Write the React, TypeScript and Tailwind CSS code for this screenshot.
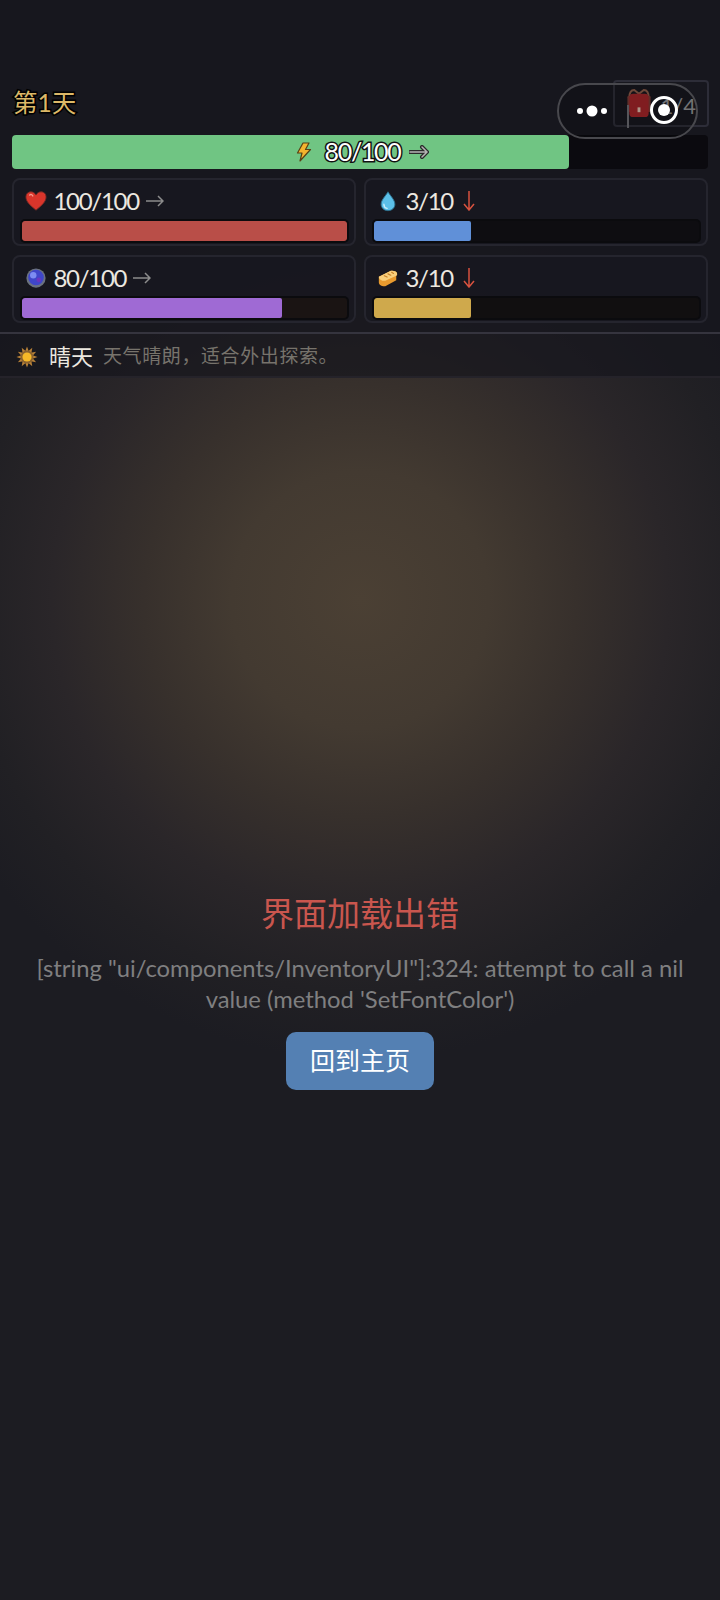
import React from 'react';

const FONT = "font-['Lato','Noto_Sans_CJK_SC',sans-serif]";

function Heart() {
    return (
        <svg viewBox="0 0 24 24" className="w-[22px] h-[22px]">
            <path d="M12 22C6 17 1 13 1 7.500 1 3.800 3.800 2 6.500 2 9 2 11 3.500 12 5.500 13 3.500 15 2 17.500 2 20.200 2 23 3.800 23 7.500 23 13 18 17 12 22Z" fill="#d9352b" stroke="#6e2a26" strokeWidth="1" />
            <path d="M5 5.500C6.500 4.500 8 5 8.500 6.500" stroke="#f59a8e" strokeWidth="1.500" fill="none" strokeLinecap="round" />
        </svg>
    );
}

function Orb() {
    return (
        <svg viewBox="0 0 24 24" className="w-[22px] h-[22px]">
            <circle cx="12" cy="12" r="10.500" fill="#6b7280" />
            <circle cx="12" cy="11.500" r="8.500" fill="#3f46c9" />
            <circle cx="9" cy="9" r="3.500" fill="#7d8cf2" />
            <circle cx="15" cy="14" r="2.500" fill="#6a35c0" />
        </svg>
    );
}

function Drop() {
    return (
        <svg viewBox="0 0 24 24" className="w-[22px] h-[22px]">
            <path d="M12 2C9 7 4.500 11 4.500 15.500 4.500 19.600 7.800 22.500 12 22.500 16.200 22.500 19.500 19.600 19.500 15.500 19.500 11 15 7 12 2Z" fill="#5cc0e8" stroke="#2b6f8c" strokeWidth="1" />
            <path d="M7.500 15.500C7.500 18 9 19.500 11 20" stroke="#c9eefb" strokeWidth="1.500" fill="none" strokeLinecap="round" />
        </svg>
    );
}

function Bread() {
    return (
        <svg viewBox="0 0 24 24" className="w-[22px] h-[22px]">
            <path d="M2 10.500 14 4.500C17 3.500 22 4.500 22 7.500 22 8.500 21.500 9 21 9.500V14.500L9 21C6 21.500 2 20 2 17Z" fill="#e89a2e" />
            <path d="M2 10.500 14 4.500C17 3.500 22 4.500 22 7.500 22 8.500 21.500 9 21 9.500L9 15C6 15.500 2 13.500 2 10.500Z" fill="#f8cf7c" />
            <path d="M8 9.500 11 11M12 7.500 15 9M16 5.800 18 7" stroke="#c9822a" strokeWidth="1.300" strokeLinecap="round" />
        </svg>
    );
}

function Sun() {
    const rays = [0, 30, 60, 90, 120, 150, 180, 210, 240, 270, 300, 330];
    return (
        <svg viewBox="0 0 24 24" className="w-[22px] h-[22px]">
            {rays.map((r) => (
                <path key={r} d="M12 0.500 14 6H10Z" fill="#b98238" transform={`rotate(${r} 12 12)`} />
            ))}
            <circle cx="12" cy="12" r="7" fill="#8a6330" />
            <circle cx="12" cy="12" r="5" fill="#f7b928" />
        </svg>
    );
}

function Bolt() {
    return (
        <svg viewBox="0 0 16 20" className="w-[16px] h-[20px]">
            <path d="M7 1 1.500 11H6L4 19 14.500 7.500H9.500L13 1Z" fill="#f5b42e" stroke="#5a4015" strokeWidth="1.200" strokeLinejoin="round" />
        </svg>
    );
}

function Bag() {
    return (
        <svg viewBox="0 0 26 30" className="w-[26px] h-[29px]">
            <path d="M3 9C3 3 5 1 8 1L13 5 18 1C21 1 23 3 23 9" stroke="#8a5a48" strokeWidth="2" fill="none" />
            <rect x="1" y="7" width="3" height="17" rx="1.500" fill="#7a3a34" />
            <rect x="22" y="7" width="3" height="17" rx="1.500" fill="#7a3a34" />
            <rect x="3" y="5" width="20" height="24" rx="4" fill="#a02529" />
            <rect x="11.500" y="19" width="3" height="5" fill="#d9b8a8" />
        </svg>
    );
}

function RightArrow() {
    return (
        <svg viewBox="0 0 18 12" className="ml-[7px] w-[18px] h-[12px]" fill="none" stroke="#8c8c8c" strokeWidth="1.500">
            <path d="M0 6H17M12 1 17 6 12 11" />
        </svg>
    );
}

function DownArrow() {
    return (
        <svg viewBox="0 0 12 20" className="ml-[10px] w-[12px] h-[20px]" fill="none" stroke="#d8523f" strokeWidth="1.500">
            <path d="M6 0V19M1 13 6 19 11 13" />
        </svg>
    );
}

function StatCard({ icon, value, down, fill, width, track }: {
    icon: React.ReactNode;
    value: string;
    down?: boolean;
    fill: string;
    width: string;
    track: string;
}) {
    return (
        <div className="h-[68px] rounded-lg border-2 border-[#25252e] bg-[#17171f]/60 px-[7.5px] pt-[4px]">
            <div className="flex items-center h-[33px]">
                <span className="w-[22px] ml-[3px] flex justify-center">{icon}</span>
                <span className="ml-[7px] text-[24px] leading-[33px] tracking-[-1.3px] text-[#ece8e0]">{value}</span>
                {down ? <DownArrow /> : <RightArrow />}
            </div>
            <div className={`mt-[4px] h-[20px] rounded-[3px] ring-2 ring-[#0b0b0e] overflow-hidden ${track}`}>
                <div className={`h-full rounded-[2px] ${fill}`} style={{ width }} />
            </div>
        </div>
    );
}

export default function App() {
    return (
        <div className={`relative min-h-[1600px] w-[720px] overflow-hidden bg-[#1c1c22] bg-[radial-gradient(circle_460px_at_360px_600px,#4b4034_0%,#433a31_28%,#37302c_47%,#2a2629_67%,#212024_85%,#1c1c22_100%)] ${FONT}`}>
            <div className="bg-[#16161d]/85 pt-[80px] pb-[9px]">
                <div className="flex justify-between items-start pl-[13px] pr-[11px] h-[55px]">
                    <span className="text-[24.5px] leading-[46px] text-[#dcb868] [-webkit-text-stroke:3px_#000] [paint-order:stroke_fill]">第1天</span>
                    <div className="relative w-[96px] h-[47px] rounded-[4px] border-2 border-[#2d2d38] text-[22px] leading-[48px] text-[#8f8f92]">
                        <span className="absolute left-[11px] top-[7px]"><Bag /></span>
                        <span className="absolute right-[11px] top-0">1/4</span>
                    </div>
                </div>

                <div className="relative mx-[12px] h-[34px] rounded-[4px] bg-[#0b0a0f]">
                    <div className="h-full rounded-[4px] bg-[#70c583]" style={{ width: '80%' }} />
                    <div className="absolute inset-0 flex items-center justify-center pl-[5px]">
                        <Bolt />
                        <span className="ml-[12px] text-[25px] tracking-[-1.3px] text-white [-webkit-text-stroke:3px_#111] [paint-order:stroke_fill]">80/100</span>
                        <svg viewBox="0 0 20 14" className="ml-[8px] w-[20px] h-[14px]" fill="none" strokeLinecap="round">
                            <path d="M1 7H18M13 2 18 7 13 12" stroke="#2a2a2a" strokeWidth="4" />
                            <path d="M1 7H18M13 2 18 7 13 12" stroke="#b5b5b5" strokeWidth="1.500" />
                        </svg>
                    </div>
                </div>

                <div className="grid grid-cols-2 gap-x-[8px] gap-y-[9px] px-[12px] mt-[9px]">
                    <StatCard icon={<Heart />} value="100/100" fill="bg-[#b94e48]" width="100%" track="bg-[#1a0f10]" />
                    <StatCard icon={<Drop />} value="3/10" down fill="bg-[#6090d8]" width="30%" track="bg-[#0e0d11]" />
                    <StatCard icon={<Orb />} value="80/100" fill="bg-[#9f6ad4]" width="80%" track="bg-[#1a1413]" />
                    <StatCard icon={<Bread />} value="3/10" down fill="bg-[#cfa94c]" width="30%" track="bg-[#110f10]" />
                </div>
            </div>

            <div className="flex items-center h-[46px] pt-[3px] border-t-2 border-b-2 border-t-[#35343e] border-b-[#25232a] bg-[#16161d]/70 pl-[16px]">
                <Sun />
                <span className="ml-[11px] text-[22px] text-[#ece8e0]">晴天</span>
                <span className="ml-[10px] text-[19px] tracking-[0.6px] text-[#77736c]">天气晴朗，适合外出探索。</span>
            </div>

            {/* error message */}
            <div className="flex flex-col items-center mt-[512px] px-[30px]">
                <h1 className="text-[33px] leading-[46px] text-[#c9564e]">界面加载出错</h1>
                <p className="mt-[17px] text-[23.8px] leading-[31px] text-center text-[#7f7f80]">
                    [string "ui/components/InventoryUI"]:324: attempt to call a nil value (method 'SetFontColor')
                </p>
                <button className="mt-[17px] w-[148px] h-[58px] rounded-[10px] bg-[#5480b3] text-[25px] text-white">回到主页</button>
            </div>

            {/* wechat capsule */}
            <div className="absolute left-[557px] top-[83px] w-[141px] h-[56px] rounded-full border-2 border-[#48484d] bg-black/20">
                <svg viewBox="0 0 141 56" className="absolute left-[-2px] top-[-2px] w-[141px] h-[56px]">
                    <circle cx="23" cy="28" r="3" fill="#fff" />
                    <circle cx="35" cy="28" r="5.500" fill="#fff" />
                    <circle cx="47" cy="28" r="3" fill="#fff" />
                    <path d="M71 22V45" stroke="#55555a" strokeWidth="2" />
                    <circle cx="107" cy="27" r="12.500" fill="none" stroke="#fff" strokeWidth="3" />
                    <circle cx="107" cy="27" r="6" fill="#fff" />
                </svg>
            </div>
        </div>
    );
}
